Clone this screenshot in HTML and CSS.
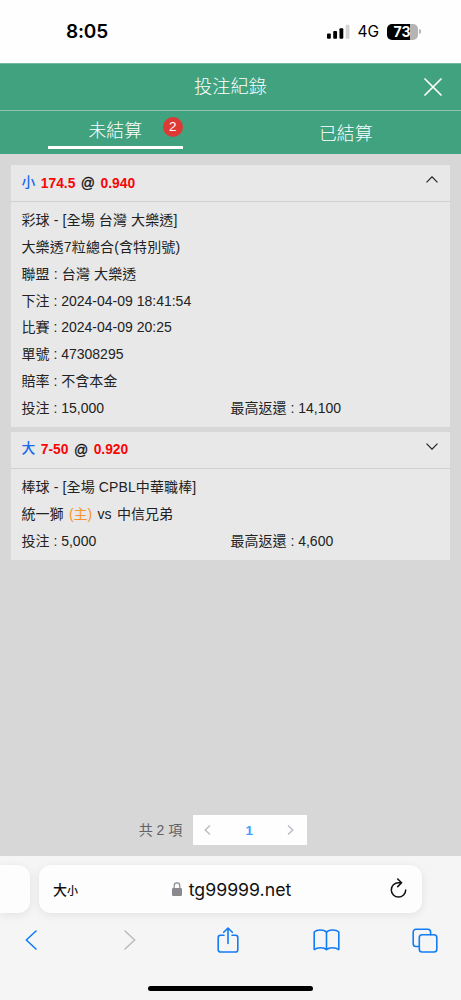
FILE: index.html
```html
<!doctype html>
<html lang="zh-Hant">
<head>
  <meta charset="utf-8" />
  <meta name="viewport" content="width=device-width,initial-scale=1,viewport-fit=cover" />
  <title>投注紀錄</title>
  <link rel="stylesheet" href="styles.css">
</head>
<body>
  <div class="status">
    <span class="clock">8:05</span>
    <div class="status-right">
      <svg class="signal" width="24" height="16" viewBox="0 0 24 16">
        <rect x="0" y="9.5" width="4" height="5.5" rx="1"/>
        <rect x="6.5" y="7" width="4" height="8" rx="1"/>
        <rect x="13" y="4" width="4" height="11" rx="1"/>
        <rect x="19.5" y="0.5" width="4" height="14.5" rx="1" fill="#d4d4d4"/>
      </svg>
      <span class="net">4G</span>
      <span class="battery">73</span>
      <i class="battery-cap"></i>
    </div>
  </div>

  <header class="titlebar">
    <h1>投注紀錄</h1>
    <button class="close" aria-label="關閉">
      <svg width="18" height="18" viewBox="0 0 18 18"><path d="M1 1l16 16M17 1L1 17"/></svg>
    </button>
  </header>

  <nav class="tabs">
    <a class="tab active"><span class="tab-label">未結算<b class="badge">2</b></span></a>
    <a class="tab"><span class="tab-label">已結算</span></a>
  </nav>

  <main class="content">
    <section class="card">
      <div class="card-head">
        <span class="pick">小</span>
        <b class="odds">174.5</b> <span class="at">@</span> <b class="odds">0.940</b>
        <svg class="chev" width="12" height="7" viewBox="0 0 12 7"><path d="M.5 6.3L6 .8l5.500 5.500"/></svg>
      </div>
      <div class="card-body">
        <div class="row event">彩球 - [全場 台灣 大樂透]</div>
        <div class="row event">大樂透7粒總合(含特別號)</div>
        <div class="row event">聯盟 : 台灣 大樂透</div>
        <div class="row">下注 : 2024-04-09 18:41:54</div>
        <div class="row">比賽 : 2024-04-09 20:25</div>
        <div class="row">單號 : 47308295</div>
        <div class="row">賠率 : 不含本金</div>
        <div class="row two"><span>投注 : 15,000</span><span>最高返還 : 14,100</span></div>
      </div>
    </section>

    <section class="card">
      <div class="card-head">
        <span class="pick">大</span>
        <b class="odds">7-50</b> <span class="at">@</span> <b class="odds">0.920</b>
        <svg class="chev" width="12" height="7" viewBox="0 0 12 7"><path d="M.5 .7L6 6.200 11.500 .7"/></svg>
      </div>
      <div class="card-body">
        <div class="row event">棒球 - [全場 CPBL中華職棒]</div>
        <div class="row teams">統一獅 <em class="home">(主)</em> vs 中信兄弟</div>
        <div class="row two"><span>投注 : 5,000</span><span>最高返還 : 4,600</span></div>
      </div>
    </section>

    <div class="pager">
      <span class="total">共 2 項</span>
      <div class="pages">
        <svg width="7" height="10" viewBox="0 0 7 10"><path d="M6 .6L1.200 5 6 9.400"/></svg>
        <b>1</b>
        <svg width="7" height="10" viewBox="0 0 7 10"><path d="M1 .6L5.800 5 1 9.400"/></svg>
      </div>
    </div>
  </main>

  <footer class="browser">
    <div class="address-row">
      <div class="prev-page"></div>
      <div class="address">
        <span class="aa">大<small>小</small></span>
        <span class="url">
          <svg width="10" height="14" viewBox="0 0 10 14">
            <path d="M2.200 7V3.700a2.800 2.800 0 0 1 5.600 0V7" fill="none" stroke="#8a8a8e" stroke-width="1.200"/>
            <rect x="0" y="6" width="10" height="8" rx="1.300" fill="#8a8a8e"/>
          </svg>
          tg99999.net
        </span>
        <svg class="reload" width="17" height="20" viewBox="0 0 17 20">
          <path d="M10.800 4.700H8.500A7.200 7.200 0 1 0 15.700 11.900M7.700 1l3.900 3.700-3.900 3.900"/>
        </svg>
      </div>
    </div>
    <div class="toolbar">
      <svg width="12" height="20" viewBox="0 0 12 20"><path d="M11 1L1.300 10 11 19"/></svg>
      <svg class="off" width="12" height="20" viewBox="0 0 12 20"><path d="M1 1l9.700 9L1 19"/></svg>
      <svg width="22" height="26" viewBox="0 0 22 26">
        <path d="M7 8.200H3.500A2.300 2.300 0 0 0 1.200 10.500v12.200A2.300 2.300 0 0 0 3.500 25h15a2.300 2.300 0 0 0 2.300-2.300V10.500a2.300 2.300 0 0 0-2.300-2.300H15M11 16.500V1.200M6.700 5.300L11 1l4.300 4.300"/>
      </svg>
      <svg width="27" height="22" viewBox="0 0 27 22">
        <path d="M13.500 3.200C11.500 .4 3.800 .2 1.200 3v17.600c3-2.400 9.800-2.400 12.300 0 2.500-2.400 9.300-2.400 12.300 0V3C23.200 .2 15.500 .4 13.500 3.200zv17.400"/>
      </svg>
      <svg width="26" height="25" viewBox="0 0 26 25">
        <rect x="7.300" y="6.700" width="17.500" height="17.300" rx="2.800"/>
        <path d="M7.300 18.500H4A2.800 2.800 0 0 1 1.200 15.700V4A2.800 2.800 0 0 1 4 1.200h11.800a2.800 2.800 0 0 1 2.800 2.800v2.700"/>
      </svg>
    </div>
    <div class="home-bar"></div>
  </footer>
</body>
</html>
```

FILE: styles.css
```css
* { box-sizing:border-box; }
html, body { margin:0; padding:0; height:100%; overflow:hidden; }
body{
  display:flex; flex-direction:column; background:#d7d7d7; color:#222;
  font-family:"Liberation Sans","Noto Sans CJK TC",sans-serif; font-size:14px;
}
svg{ display:block; flex:none; }

/* phone status bar */
.status{
  height:63px; flex:none; background:#fefefe; display:flex; align-items:center;
  justify-content:space-between; padding:0 40px 0 66px; color:#000;
}
.clock{ font:600 19px Inter,sans-serif; letter-spacing:-.2px; }
.status-right{ display:flex; align-items:center; }
.signal{ width:23px; }
.net{ font:400 15.5px Inter,sans-serif; margin-left:7px; }
.battery{
  width:31px; height:16px; border-radius:5px; margin-left:8px; padding-right:1px; text-align:center;
  background:linear-gradient(90deg,#000 73%,#b4b4b4 73%);
  color:#fff; font:700 14px/16px Inter,sans-serif;
}
.battery-cap{ width:2px; height:5px; background:#b4b4b4; border-radius:0 2px 2px 0; margin-left:1px; }

.titlebar{
  height:48px; flex:none; background:#41a280; border-top:1px solid #73b99f; border-bottom:1px solid #90c0ae;
  display:grid; grid-template-columns:1fr auto 1fr; align-items:center; padding:0 19px 1px; color:#fff;
}
.titlebar h1{ grid-column:2; margin:0; font-size:18.2px; line-height:26px; font-weight:300; }
.close{ justify-self:end; padding:0; border:0; background:none; }
.close path{ fill:none; stroke:#fff; stroke-width:1.700; stroke-linecap:round; }

.tabs{ height:43px; flex:none; display:flex; background:#41a280; color:#fff; }
.tab{ flex:1; display:flex; justify-content:center; padding:0 47.5px; line-height:46px; }
.tab-label{ position:relative; font-size:17.8px; font-weight:300; }
.tab.active .tab-label{ width:135px; height:38px; line-height:40px; border-bottom:3px solid #fff; text-align:center; }
.badge{
  position:absolute; right:0; top:6px; width:20px; height:20px; border-radius:50%;
  background:#dc3b35; font-size:13.5px; font-weight:400; line-height:20px;
}

.content{ flex:1; display:flex; flex-direction:column; gap:5px; padding:11px; }
.card{ background:#e8e8e8; }
.card-head{
  height:37px; display:flex; align-items:center; gap:5.500px; padding:0 12px 0 10.500px;
  border-bottom:1px solid #d0d0d0;
}
.pick{ color:#1768ee; font-size:13.8px; font-weight:500; line-height:18px; padding-bottom:1px; }
.odds{ color:#f60606; font-size:13.8px; }
.at{ color:#111; -webkit-text-stroke:.3px #111; }
.chev{ margin-left:auto; margin-bottom:7px; }
.chev path{ fill:none; stroke:#222; stroke-width:1.200; }
.card-body{ padding:5.300px 10.500px; }
.row{ height:26.8px; line-height:26.8px; white-space:pre; }
.event{ letter-spacing:.12px; }
.teams{ word-spacing:1.5px; }
.two{ display:grid; grid-template-columns:1fr 1fr; }
.home{ color:#f7932d; font-style:normal; }

.pager{ display:flex; align-items:center; justify-content:center; gap:11px; margin-top:auto; padding-right:15px; }
.total{ color:#606266; line-height:18px; padding-bottom:1px; }
.pages{
  width:114px; height:30px; background:#fefefe; display:flex; align-items:center;
  justify-content:space-between; padding:0 13px 0 11px;
}
.pages b{ color:#409eff; font-size:13.5px; }
.pages path{ fill:none; stroke:#b9bcc4; stroke-width:1.400; }

/* browser chrome */
.browser{ height:144px; flex:none; background:#f5f5f5; padding-top:9px; overflow:hidden; }
.address-row{ display:flex; gap:9px; height:48px; }
.prev-page{ width:30px; background:#fdfdfd; border-radius:0 12px 12px 0; box-shadow:0 2px 10px rgba(0,0,0,.08); }
.address{
  width:383px; border-radius:12px; background:#fdfdfd; box-shadow:0 2px 10px rgba(0,0,0,.08);
  display:grid; grid-template-columns:1fr auto 1fr; align-items:center; padding:0 15px 0 14px; color:#111;
}
.aa{ font-weight:500; font-size:14px; }
.aa small{ font-size:11px; }
.url{ display:flex; align-items:center; gap:7px; padding-left:3px; font:400 17.7px Inter,sans-serif; }
.reload{ justify-self:end; margin-bottom:3px; }
.reload path{ fill:none; stroke:#111; stroke-width:1.500; stroke-linecap:round; stroke-linejoin:round; }
.toolbar{
  display:grid; grid-template-columns:repeat(5,98.4px); justify-content:center;
  align-items:center; justify-items:center; height:54px; padding-right:5px;
}
.toolbar path, .toolbar rect{ fill:none; stroke:#117cf6; stroke-width:1.600; stroke-linecap:round; stroke-linejoin:round; }
.toolbar .off path{ stroke:#bcbcbc; }
.home-bar{ width:165px; height:5px; margin:19px auto 0; border-radius:3px; background:#000; }
```
